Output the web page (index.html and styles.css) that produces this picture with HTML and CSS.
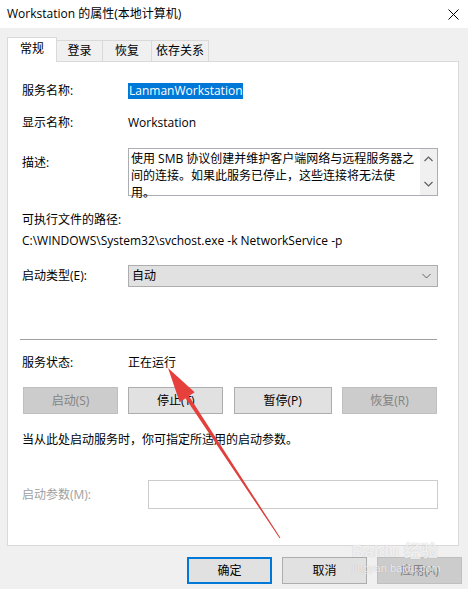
FILE: index.html
```html
<!DOCTYPE html>
<html lang="zh-CN">
<head>
<meta charset="utf-8">
<title>Workstation 的属性(本地计算机)</title>
<link rel="stylesheet" href="styles.css">
</head>
<body>
<div class="window">
  <div class="titlebar">
    <span class="title">Workstation 的属性(本地计算机)</span>
    <svg class="close" width="11" height="11" viewBox="0 0 11 11"><path d="M0.5 0.5 L10.5 10.5 M10.5 0.5 L0.5 10.5" stroke="#000" stroke-width="1" fill="none"/></svg>
  </div>
  <div class="tabs">
    <div class="tab active w1">常规</div>
    <div class="tab w2">登录</div>
    <div class="tab w3">恢复</div>
    <div class="tab w4">依存关系</div>
  </div>
  <div class="panel">
    <div class="row r1">
      <span class="label">服务名称:</span>
      <span class="value"><span class="selected">LanmanWorkstation</span></span>
    </div>
    <div class="row r2">
      <span class="label">显示名称:</span>
      <span class="value">Workstation</span>
    </div>
    <div class="row r3">
      <span class="label top">描述:</span>
      <div class="textarea">
        <div class="ta-text">使用 SMB 协议创建并维护客户端网络与远程服务器之间的连接。如果此服务已停止，这些连接将无法使用。</div>
        <div class="ta-scroll">
          <svg width="9" height="6" viewBox="0 0 9 6"><path d="M0.5 5 L4.5 1 L8.5 5" stroke="#606060" stroke-width="1.2" fill="none"/></svg>
          <svg width="9" height="6" viewBox="0 0 9 6"><path d="M0.5 1 L4.5 5 L8.5 1" stroke="#606060" stroke-width="1.2" fill="none"/></svg>
        </div>
      </div>
    </div>
    <div class="line r4">可执行文件的路径:</div>
    <div class="line r5">C:\WINDOWS\System32\svchost.exe -k NetworkService -p</div>
    <div class="row r6">
      <span class="label">启动类型(E):</span>
      <div class="select">
        <span>自动</span>
        <svg width="9" height="6" viewBox="0 0 9 6"><path d="M0.5 1 L4.5 5 L8.5 1" stroke="#606060" stroke-width="1" fill="none"/></svg>
      </div>
    </div>
    <div class="separator"></div>
    <div class="row r7">
      <span class="label">服务状态:</span>
      <span class="value">正在运行</span>
    </div>
    <div class="buttons r8">
      <div class="btn disabled">启动(S)</div>
      <div class="btn">停止(T)</div>
      <div class="btn wide">暂停(P)</div>
      <div class="btn disabled">恢复(R)</div>
    </div>
    <div class="line r9">当从此处启动服务时，你可指定所适用的启动参数。</div>
    <div class="row param r10">
      <span class="label dim">启动参数(M):</span>
      <div class="input"></div>
    </div>
  </div>
  <div class="footer">
    <div class="btn default">确定</div>
    <div class="btn">取消</div>
    <div class="btn disabled">应用(A)</div>
  </div>
  <div class="watermark">
    <span class="wm-logo">Bai<span class="paw">du</span> 经验</span>
    <span class="wm-url">jingyan.baidu.com</span>
  </div>
  <svg class="arrow" width="468" height="589" viewBox="0 0 468 589">
    <defs>
      <linearGradient id="ag" x1="168" y1="368" x2="280" y2="538" gradientUnits="userSpaceOnUse">
        <stop offset="0" stop-color="#e8403c"/>
        <stop offset="1" stop-color="#d8403c"/>
      </linearGradient>
    </defs>
    <polygon points="168,368 194.7,392.2 188.9,396.1 280.4,537.7 279.6,538.3 185.5,398.3 179.7,402.2" fill="url(#ag)"/>
  </svg>
</div>
</body>
</html>
```

FILE: styles.css
```css
* { box-sizing: border-box; }
html, body { margin: 0; padding: 0; }
body {
  width: 468px;
  height: 589px;
  overflow: hidden;
  background: #f0f0f0;
  font-family: "Open Sans", "Noto Sans CJK SC", sans-serif;
  font-size: 12px;
  color: #000;
}
.window {
  position: relative;
  width: 468px;
  height: 589px;
}
.titlebar {
  height: 28px;
  background: #fff;
  display: flex;
  align-items: center;
  justify-content: space-between;
  padding: 0 9px 0 7px;
}
.title { font-size: 12px; line-height: 16px; }
.tabs {
  height: 33px;
  display: flex;
  align-items: flex-end;
  padding-left: 7px;
}
.tab {
  height: 21px;
  border: 1px solid #d9d9d9;
  border-bottom: none;
  border-left: none;
  background: #f0f0f0;
  display: flex;
  align-items: center;
  justify-content: center;
  line-height: 16px;
}
.tab.active {
  height: 25px;
  border-left: 1px solid #d9d9d9;
  background: #fff;
  position: relative;
  z-index: 1;
  margin-bottom: -1px;
  padding-bottom: 2px;
}
.w1 { width: 50px; }
.w2 { width: 46px; }
.w3 { width: 49px; }
.w4 { width: 57px; }
.panel {
  margin: 0 9px 0 7px;
  height: 485px;
  background: #fff;
  border: 1px solid #d9d9d9;
  padding: 19px 20px 0 14px;
}
.row {
  display: grid;
  grid-template-columns: 106px 1fr;
  align-items: center;
  min-height: 20px;
  line-height: 20px;
}
.line { line-height: 20px; height: 20px; white-space: nowrap; }
.label { white-space: nowrap; }
.label.top { align-self: start; padding-top: 5px; }
.label.dim { color: #a0a0a0; }
.selected {
  background: #0078d7;
  color: #fff;
  display: inline-block;
  line-height: 16px;
  padding: 0 1px;
}
.r2 { margin-top: 12px; }
.r3 { margin-top: 15px; }
.r4 { margin-top: 14px; }
.r5 { margin-top: 1px; }
.r6 { margin-top: 14px; }
.textarea {
  height: 48px;
  border: 1px solid #abadb3;
  display: flex;
}
.ta-text {
  flex: 1;
  padding: 1px 2px 0 2px;
  line-height: 17px;
}
.ta-scroll {
  width: 17px;
  background: #f0f0f0;
  display: flex;
  flex-direction: column;
  align-items: center;
  justify-content: space-between;
  padding: 7px 0 8px;
}
.select {
  height: 22px;
  background: #e1e1e1;
  border: 1px solid #adadad;
  display: flex;
  align-items: center;
  justify-content: space-between;
  padding: 0 6px 0 3px;
}
.separator {
  margin: 52px 0 0 -2px;
  height: 1px;
  background: #a0a0a0;
  width: 417px;
}
.r7 { margin-top: 13px; }
.buttons {
  margin-top: 14px;
  display: flex;
  justify-content: space-between;
  padding-left: 1px;
  padding-right: 1px;
}
.buttons .btn { width: 95px; }
.buttons .btn.wide { width: 98px; }
.btn {
  height: 27px;
  background: #e1e1e1;
  border: 1px solid #adadad;
  display: flex;
  align-items: center;
  justify-content: center;
  line-height: 16px;
}
.btn.disabled {
  background: #cccccc;
  border-color: #bfbfbf;
  color: #838383;
}
.r9 { margin-top: 16px; }
.r10 { margin-top: 30px; }
.param { grid-template-columns: 126px 1fr; }
.input {
  height: 29px;
  border: 1px solid #cccccc;
  background: #fff;
}
.footer {
  margin-top: 11px;
  display: flex;
  justify-content: flex-end;
  gap: 10px;
  padding-right: 6px;
}
.footer .btn { width: 85px; height: 27px; }
.footer .btn.default { border: 2px solid #0078d7; }
.watermark {
  position: absolute;
  left: 352px;
  top: 542px;
  display: flex;
  flex-direction: column;
  color: rgba(255, 255, 255, 0.75);
  text-shadow: 0 0 1px rgba(120, 120, 120, 0.45);
  pointer-events: none;
}
.wm-logo { font-family: "Liberation Sans", "Noto Sans CJK SC", sans-serif; font-size: 17px; font-weight: bold; line-height: 20px; }
.wm-url { font-family: "Liberation Sans", sans-serif; font-size: 11px; line-height: 12px; }
.arrow {
  position: absolute;
  left: 0;
  top: 0;
  pointer-events: none;
}
```
